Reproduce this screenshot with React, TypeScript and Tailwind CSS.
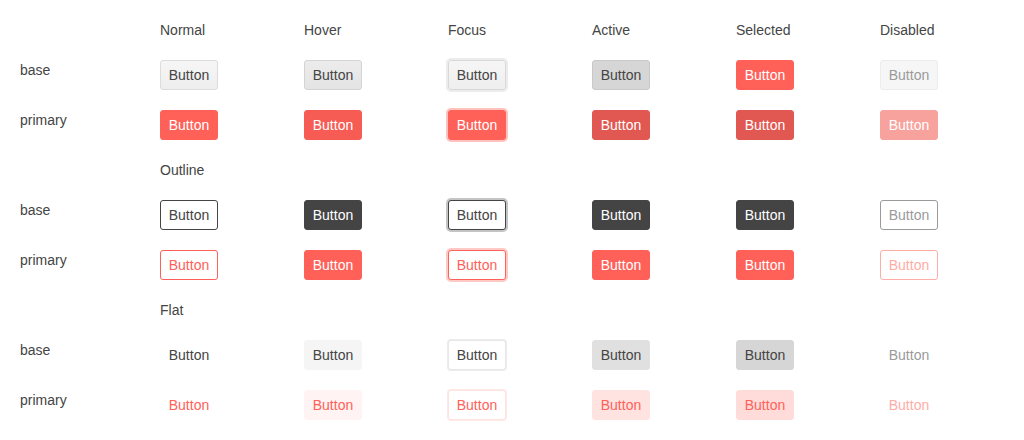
import React from 'react';

type Variant = 'base' | 'primary';
type Kind = 'default' | 'outline' | 'flat';

const states = ['Normal', 'Hover', 'Focus', 'Active', 'Selected', 'Disabled'];

// one class string per state, in the same order as the header
const styles: Record<Kind, Record<Variant, string[]>> = {
  default: {
    base: [
      'bg-gradient-to-b from-[#f6f6f6] to-[#eeeeee] border-[#dcdcdc] text-[#444]',
      'bg-gradient-to-b from-[#ececec] to-[#e4e4e4] border-[#d4d4d4] text-[#444]',
      'bg-gradient-to-b from-[#f6f6f6] to-[#eeeeee] border-[#d8d8d8] text-[#444] shadow-[0_0_0_2px_#ececec]',
      'bg-[#d6d6d6] border-[#c9c9c9] text-[#444]',
      'bg-[#ff6159] border-[#ff6159] text-white',
      'bg-[#f6f6f6] border-[#ececec] text-[#9a9a9a]',
    ],
    primary: [
      'bg-[#ff6159] border-[#ff6159] text-white',
      'bg-[#f75c54] border-[#f75c54] text-white',
      'bg-[#ff6159] border-[#ff6159] text-white shadow-[0_0_0_2px_#ffc3bf]',
      'bg-[#e05851] border-[#e05851] text-white',
      'bg-[#e05851] border-[#e05851] text-white',
      'bg-[#f8a29d] border-[#f8a29d] text-white',
    ],
  },
  outline: {
    base: [
      'bg-white border-[#444] text-[#444]',
      'bg-[#444] border-[#444] text-white',
      'bg-white border-[#444] text-[#444] shadow-[0_0_0_2px_#c4c4c4]',
      'bg-[#444] border-[#444] text-white',
      'bg-[#444] border-[#444] text-white',
      'bg-white border-[#9a9a9a] text-[#9a9a9a]',
    ],
    primary: [
      'bg-white border-[#ff6159] text-[#ff6159]',
      'bg-[#ff6159] border-[#ff6159] text-white',
      'bg-white border-[#ff6159] text-[#ff6159] shadow-[0_0_0_2px_#ffcac6]',
      'bg-[#ff6159] border-[#ff6159] text-white',
      'bg-[#ff6159] border-[#ff6159] text-white',
      'bg-white border-[#ffaca7] text-[#ffaca7]',
    ],
  },
  flat: {
    base: [
      'bg-transparent border-transparent text-[#444]',
      'bg-[#f5f5f5] border-[#f5f5f5] text-[#444]',
      'bg-white border-[#e8e8e8] text-[#444] shadow-[0_0_0_1px_#ececec]',
      'bg-[#e0e0e0] border-[#e0e0e0] text-[#444]',
      'bg-[#d6d6d6] border-[#d6d6d6] text-[#444]',
      'bg-transparent border-transparent text-[#9a9a9a]',
    ],
    primary: [
      'bg-transparent border-transparent text-[#ff6159]',
      'bg-[#fff4f3] border-[#fff4f3] text-[#ff6159]',
      'bg-white border-[#ffe3e1] text-[#ff6159] shadow-[0_0_0_1px_#ffe9e7]',
      'bg-[#ffe3e1] border-[#ffe3e1] text-[#ff6159]',
      'bg-[#ffdcda] border-[#ffdcda] text-[#ff6159]',
      'bg-transparent border-transparent text-[#ffaca7]',
    ],
  },
};

const Btn = ({ cls }: { cls: string }) => (
  <button className={`h-[30px] w-[58px] rounded-[3px] border text-[14px] leading-none ${cls}`}>Button</button>
);

const Section = ({ kind, title }: { kind: Kind; title?: string }) => (
  <>
    {title && (
      <>
        <div />
        <div className="col-span-6 h-5 leading-5">{title}</div>
      </>
    )}
    {(['base', 'primary'] as Variant[]).map((v) => (
      <React.Fragment key={v}>
        <div className="leading-5">{v}</div>
        {styles[kind][v].map((cls, i) => (
          <div key={i}>
            <Btn cls={cls} />
          </div>
        ))}
      </React.Fragment>
    ))}
  </>
);

export default function App() {
  return (
    <div className="min-h-[440px] bg-white pl-5 pt-5 text-[14px] text-[#444] font-['Liberation_Sans',Arial,sans-serif]">
      <div className="grid grid-cols-[140px_repeat(6,144px)] gap-y-5">
        <div />
        {states.map((s) => (
          <div key={s} className="h-5 leading-5">{s}</div>
        ))}
        <Section kind="default" />
        <Section kind="outline" title="Outline" />
        <Section kind="flat" title="Flat" />
      </div>
    </div>
  );
}
